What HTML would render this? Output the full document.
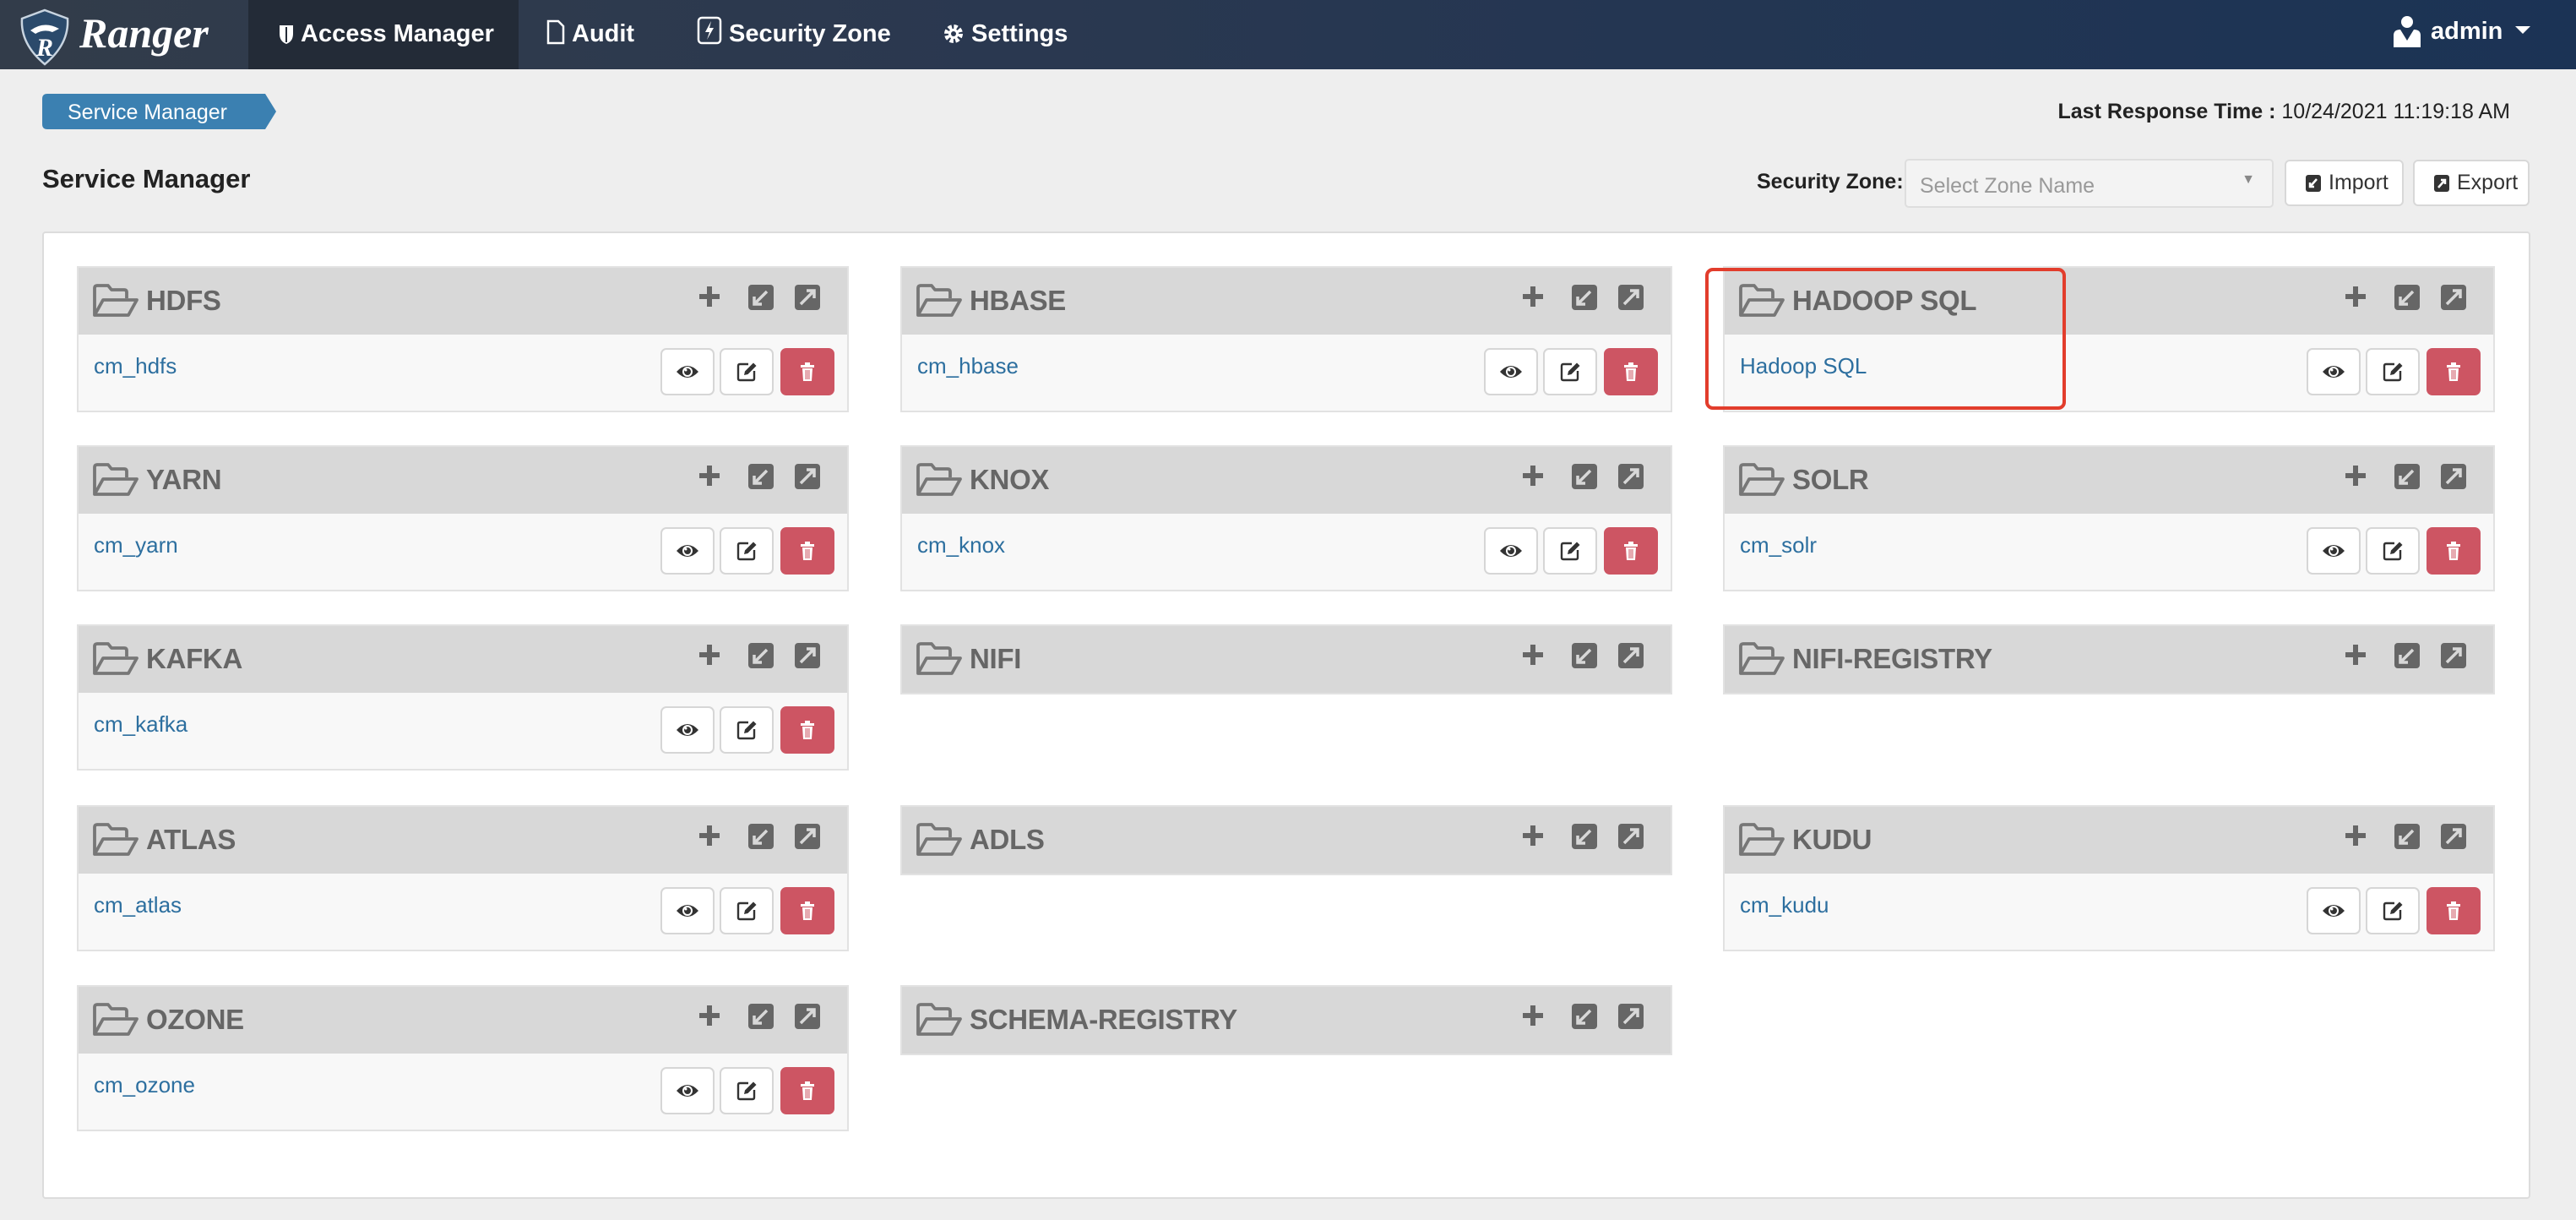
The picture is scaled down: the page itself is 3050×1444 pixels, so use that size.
<!DOCTYPE html>
<html><head><meta charset="utf-8"><style>
*{box-sizing:border-box;margin:0;padding:0}
body{width:3050px;height:1444px;background:#eeeeee;font-family:"Liberation Sans",sans-serif;position:relative;overflow:hidden}
.nav{position:absolute;left:0;top:0;width:3050px;height:82px;background:linear-gradient(90deg,#323c4a 0%,#2a3850 40%,#1b3355 100%)}
.act{position:absolute;left:294px;top:0;width:320px;height:82px;background:#232b37}
.ni{position:absolute;top:0;height:82px;line-height:80px;color:#fff;font-weight:bold;font-size:29px;white-space:nowrap}
.ni svg{vertical-align:-4px;margin-right:8px}
.abs{position:absolute}
.panel{position:absolute;left:50px;top:274px;width:2946px;height:1145px;background:#fff;border:2px solid #dcdcdc;border-radius:4px}
.card{position:absolute;width:914px;border:2px solid #e2e2e2;background:#f8f8f8}
.hd{height:79px;background:#d8d8d8;position:relative}
.hd .t{position:absolute;left:80px;top:20px;font-size:33px;font-weight:bold;color:#666;letter-spacing:-0.3px}
.hd .f{position:absolute;left:16px;top:18px}
.hd .ic{position:absolute;top:20px}
.bd{height:90px;position:relative}
.bd a{position:absolute;left:18px;top:22px;font-size:26px;color:#2d6f9f;text-decoration:none}
.b{position:absolute;top:16px;width:64px;height:56px;border:2px solid #d6d6d6;border-radius:7px;background:#fff;display:flex;align-items:center;justify-content:center}
.b.del{background:#cd5563;border-color:#cd5563}
.btn{position:absolute;top:189px;height:55px;background:#fff;border:2px solid #d8d8d8;border-radius:6px;font-size:25px;color:#333;line-height:51px;padding-left:22px}
.btn svg{vertical-align:-4px;margin-right:8px}
</style></head><body>
<div class="nav"></div>
<div class="act"></div>
<svg class="abs" style="left:22px;top:10px" width="62" height="68" viewBox="0 0 62 68"><path d="M31 2 L58 12 Q60 42 31 66 Q2 42 4 12 Z" fill="#2b4a6b" stroke="#c8d4e0" stroke-width="2.5"/><path d="M14 26 Q30 14 48 24 L40 28 Q30 24 20 30Z" fill="#fff"/><text x="31" y="56" text-anchor="middle" font-family="Liberation Serif" font-style="italic" font-weight="bold" font-size="30" fill="#fff">R</text></svg>
<div class="abs" style="left:94px;top:10px;font-family:'Liberation Serif',serif;font-style:italic;font-weight:bold;font-size:50px;color:#fff;">Ranger</div>
<div class="ni" style="left:330px"><svg width="18" height="24" viewBox="0 0 18 24"><path d="M1 1h16v10q0 9-8 12q-8-3-8-12z" fill="#fff"/><path d="M9 3v18" stroke="#232b37" stroke-width="2"/></svg>Access Manager</div>
<div class="ni" style="left:647px"><svg width="22" height="30" viewBox="0 0 22 30"><path d="M2 2h12l6 6v20H2z" fill="none" stroke="#fff" stroke-width="2.5"/></svg>Audit</div>
<div class="ni" style="left:825px"><svg width="30" height="34" viewBox="0 0 30 34"><rect x="2" y="2" width="26" height="30" rx="4" fill="none" stroke="#fff" stroke-width="2.5"/><path d="M17 6 L10 19 H15 L12 28 L20 14 H15 Z" fill="#fff"/></svg>Security Zone</div>
<div class="ni" style="left:1116px"><svg width="26" height="26" viewBox="0 0 26 26"><circle cx="13" cy="13" r="8" fill="none" stroke="#fff" stroke-width="6" stroke-dasharray="4 2.3"/><circle cx="13" cy="13" r="6" fill="#fff"/><circle cx="13" cy="13" r="3" fill="#2a3850"/></svg>Settings</div>
<svg class="abs" style="left:2832px;top:18px" width="36" height="40" viewBox="0 0 36 40"><circle cx="18" cy="8" r="7" fill="#fff"/><path d="M2 38 V24 Q2 17 10 17 L18 30 L26 17 Q34 17 34 24 V38Z" fill="#fff"/><path d="M16 20 L18 30 L20 20Z" fill="#1d3456"/></svg>
<div class="ni" style="left:2878px;top:-3px">admin</div>
<svg class="abs" style="left:2978px;top:31px" width="18" height="10"><path d="M0 0H18L9 9Z" fill="#fff"/></svg>

<svg class="abs" style="left:50px;top:111px" width="278" height="42"><path d="M6 0H264L277 21L264 42H6Q0 42 0 36V6Q0 0 6 0Z" fill="#3b80b1"/><text x="30" y="30" font-family="Liberation Sans" font-size="25" fill="#fff">Service Manager</text></svg>
<div class="abs" style="right:78px;top:118px;font-size:25px;color:#222"><b>Last Response Time :</b> 10/24/2021 11:19:18 AM</div>
<div class="abs" style="left:50px;top:194px;font-size:31px;font-weight:bold;color:#222">Service Manager</div>
<div class="abs" style="left:2080px;top:201px;font-size:25px;font-weight:bold;color:#222">Security Zone:</div>
<div class="abs" style="left:2255px;top:188px;width:437px;height:58px;background:#f3f3f3;border:2px solid #dedede;border-radius:5px;font-size:25px;color:#999;padding:16px 16px">Select Zone Name<span style="position:absolute;right:20px;top:14px;font-size:16px;color:#888">▼</span></div>
<div class="btn" style="left:2705px;width:141px"><svg width="20" height="22" viewBox="0 0 20 22"><rect x="1" y="1" width="18" height="20" rx="3" fill="#333"/><path d="M14 6 L7 14 M6 10 V15 H11" stroke="#fff" stroke-width="2.5" fill="none"/></svg>Import</div>
<div class="btn" style="left:2857px;width:138px"><svg width="20" height="22" viewBox="0 0 20 22"><rect x="1" y="1" width="18" height="20" rx="3" fill="#333"/><path d="M6 16 L13 8 M9 7 H14 V12" stroke="#fff" stroke-width="2.5" fill="none"/></svg>Export</div>

<div class="panel"></div>

<svg width="0" height="0" style="position:absolute"><defs>
<g id="fold"><path d="M3 38 V6 Q3 3 6 3 H19 L23 8 H38 Q41 8 41 11 V18 M3 38 L13 20 H53 L43 38 Z" fill="none" stroke="#777" stroke-width="3.8" stroke-linejoin="round"/></g>
<g id="acts"><path d="M14 2 V26 M2 14 H26" stroke="#666" stroke-width="6"/><rect x="60" y="0" width="30" height="30" rx="4" fill="#666"/><path d="M82 8 L68 22 M67 14 V23 H76" stroke="#d8d8d8" stroke-width="3.5" fill="none"/><rect x="115" y="0" width="30" height="30" rx="4" fill="#666"/><path d="M122 23 L137 8 M129 7 H138 V16" stroke="#d8d8d8" stroke-width="3.5" fill="none"/></g>
<g id="eye"><path d="M1 10 Q14 -4 27 10 Q14 24 1 10Z" fill="#333"/><circle cx="14" cy="10" r="6" fill="#fff"/><circle cx="14" cy="10" r="4" fill="#333"/><circle cx="12" cy="8" r="1.5" fill="#fff"/></g>
<g id="edit"><path d="M15 4 H5 Q3 4 3 6 V21 Q3 23 5 23 H20 Q22 23 22 21 V12" fill="none" stroke="#333" stroke-width="2.4"/><path d="M10 17 L11 12.5 L21 2.5 L24.5 6 L14.5 16 Z" fill="#333"/></g>
<g id="trash"><rect x="1" y="3" width="16" height="3" fill="#fff"/><rect x="6" y="0" width="6" height="3" fill="#fff"/><path d="M3 7 H15 L14 22 H4Z" fill="#fff"/><path d="M7 9V20M9 9V20M11 9V20" stroke="#cd5563" stroke-width="1"/></g>
</defs></svg>

<!-- cards -->
<div class="card" style="left:91px;top:315px"><div class="hd"><svg class="f" width="58" height="42"><use href="#fold"/></svg><div class="t">HDFS</div><svg class="ic" style="left:733px" width="150" height="32"><use href="#acts"/></svg></div><div class="bd"><a>cm_hdfs</a><div class="b" style="left:689px"><svg width="28" height="20"><use href="#eye"/></svg></div><div class="b" style="left:759px"><svg width="26" height="26"><use href="#edit"/></svg></div><div class="b del" style="left:831px"><svg width="18" height="23"><use href="#trash"/></svg></div></div></div>
<div class="card" style="left:1066px;top:315px"><div class="hd"><svg class="f" width="58" height="42"><use href="#fold"/></svg><div class="t">HBASE</div><svg class="ic" style="left:733px" width="150" height="32"><use href="#acts"/></svg></div><div class="bd"><a>cm_hbase</a><div class="b" style="left:689px"><svg width="28" height="20"><use href="#eye"/></svg></div><div class="b" style="left:759px"><svg width="26" height="26"><use href="#edit"/></svg></div><div class="b del" style="left:831px"><svg width="18" height="23"><use href="#trash"/></svg></div></div></div>
<div class="card" style="left:2040px;top:315px"><div class="hd"><svg class="f" width="58" height="42"><use href="#fold"/></svg><div class="t">HADOOP SQL</div><svg class="ic" style="left:733px" width="150" height="32"><use href="#acts"/></svg></div><div class="bd"><a>Hadoop SQL</a><div class="b" style="left:689px"><svg width="28" height="20"><use href="#eye"/></svg></div><div class="b" style="left:759px"><svg width="26" height="26"><use href="#edit"/></svg></div><div class="b del" style="left:831px"><svg width="18" height="23"><use href="#trash"/></svg></div></div></div>

<div class="card" style="left:91px;top:527px"><div class="hd"><svg class="f" width="58" height="42"><use href="#fold"/></svg><div class="t">YARN</div><svg class="ic" style="left:733px" width="150" height="32"><use href="#acts"/></svg></div><div class="bd"><a>cm_yarn</a><div class="b" style="left:689px"><svg width="28" height="20"><use href="#eye"/></svg></div><div class="b" style="left:759px"><svg width="26" height="26"><use href="#edit"/></svg></div><div class="b del" style="left:831px"><svg width="18" height="23"><use href="#trash"/></svg></div></div></div>
<div class="card" style="left:1066px;top:527px"><div class="hd"><svg class="f" width="58" height="42"><use href="#fold"/></svg><div class="t">KNOX</div><svg class="ic" style="left:733px" width="150" height="32"><use href="#acts"/></svg></div><div class="bd"><a>cm_knox</a><div class="b" style="left:689px"><svg width="28" height="20"><use href="#eye"/></svg></div><div class="b" style="left:759px"><svg width="26" height="26"><use href="#edit"/></svg></div><div class="b del" style="left:831px"><svg width="18" height="23"><use href="#trash"/></svg></div></div></div>
<div class="card" style="left:2040px;top:527px"><div class="hd"><svg class="f" width="58" height="42"><use href="#fold"/></svg><div class="t">SOLR</div><svg class="ic" style="left:733px" width="150" height="32"><use href="#acts"/></svg></div><div class="bd"><a>cm_solr</a><div class="b" style="left:689px"><svg width="28" height="20"><use href="#eye"/></svg></div><div class="b" style="left:759px"><svg width="26" height="26"><use href="#edit"/></svg></div><div class="b del" style="left:831px"><svg width="18" height="23"><use href="#trash"/></svg></div></div></div>

<div class="card" style="left:91px;top:739px"><div class="hd"><svg class="f" width="58" height="42"><use href="#fold"/></svg><div class="t">KAFKA</div><svg class="ic" style="left:733px" width="150" height="32"><use href="#acts"/></svg></div><div class="bd"><a>cm_kafka</a><div class="b" style="left:689px"><svg width="28" height="20"><use href="#eye"/></svg></div><div class="b" style="left:759px"><svg width="26" height="26"><use href="#edit"/></svg></div><div class="b del" style="left:831px"><svg width="18" height="23"><use href="#trash"/></svg></div></div></div>
<div class="card" style="left:1066px;top:739px"><div class="hd"><svg class="f" width="58" height="42"><use href="#fold"/></svg><div class="t">NIFI</div><svg class="ic" style="left:733px" width="150" height="32"><use href="#acts"/></svg></div></div>
<div class="card" style="left:2040px;top:739px"><div class="hd"><svg class="f" width="58" height="42"><use href="#fold"/></svg><div class="t">NIFI-REGISTRY</div><svg class="ic" style="left:733px" width="150" height="32"><use href="#acts"/></svg></div></div>

<div class="card" style="left:91px;top:953px"><div class="hd"><svg class="f" width="58" height="42"><use href="#fold"/></svg><div class="t">ATLAS</div><svg class="ic" style="left:733px" width="150" height="32"><use href="#acts"/></svg></div><div class="bd"><a>cm_atlas</a><div class="b" style="left:689px"><svg width="28" height="20"><use href="#eye"/></svg></div><div class="b" style="left:759px"><svg width="26" height="26"><use href="#edit"/></svg></div><div class="b del" style="left:831px"><svg width="18" height="23"><use href="#trash"/></svg></div></div></div>
<div class="card" style="left:1066px;top:953px"><div class="hd"><svg class="f" width="58" height="42"><use href="#fold"/></svg><div class="t">ADLS</div><svg class="ic" style="left:733px" width="150" height="32"><use href="#acts"/></svg></div></div>
<div class="card" style="left:2040px;top:953px"><div class="hd"><svg class="f" width="58" height="42"><use href="#fold"/></svg><div class="t">KUDU</div><svg class="ic" style="left:733px" width="150" height="32"><use href="#acts"/></svg></div><div class="bd"><a>cm_kudu</a><div class="b" style="left:689px"><svg width="28" height="20"><use href="#eye"/></svg></div><div class="b" style="left:759px"><svg width="26" height="26"><use href="#edit"/></svg></div><div class="b del" style="left:831px"><svg width="18" height="23"><use href="#trash"/></svg></div></div></div>

<div class="card" style="left:91px;top:1166px"><div class="hd"><svg class="f" width="58" height="42"><use href="#fold"/></svg><div class="t">OZONE</div><svg class="ic" style="left:733px" width="150" height="32"><use href="#acts"/></svg></div><div class="bd"><a>cm_ozone</a><div class="b" style="left:689px"><svg width="28" height="20"><use href="#eye"/></svg></div><div class="b" style="left:759px"><svg width="26" height="26"><use href="#edit"/></svg></div><div class="b del" style="left:831px"><svg width="18" height="23"><use href="#trash"/></svg></div></div></div>
<div class="card" style="left:1066px;top:1166px"><div class="hd"><svg class="f" width="58" height="42"><use href="#fold"/></svg><div class="t">SCHEMA-REGISTRY</div><svg class="ic" style="left:733px" width="150" height="32"><use href="#acts"/></svg></div></div>

<div class="abs" style="left:2019px;top:317px;width:427px;height:168px;border:4px solid #e23d2c;border-radius:9px"></div>
</body></html>
